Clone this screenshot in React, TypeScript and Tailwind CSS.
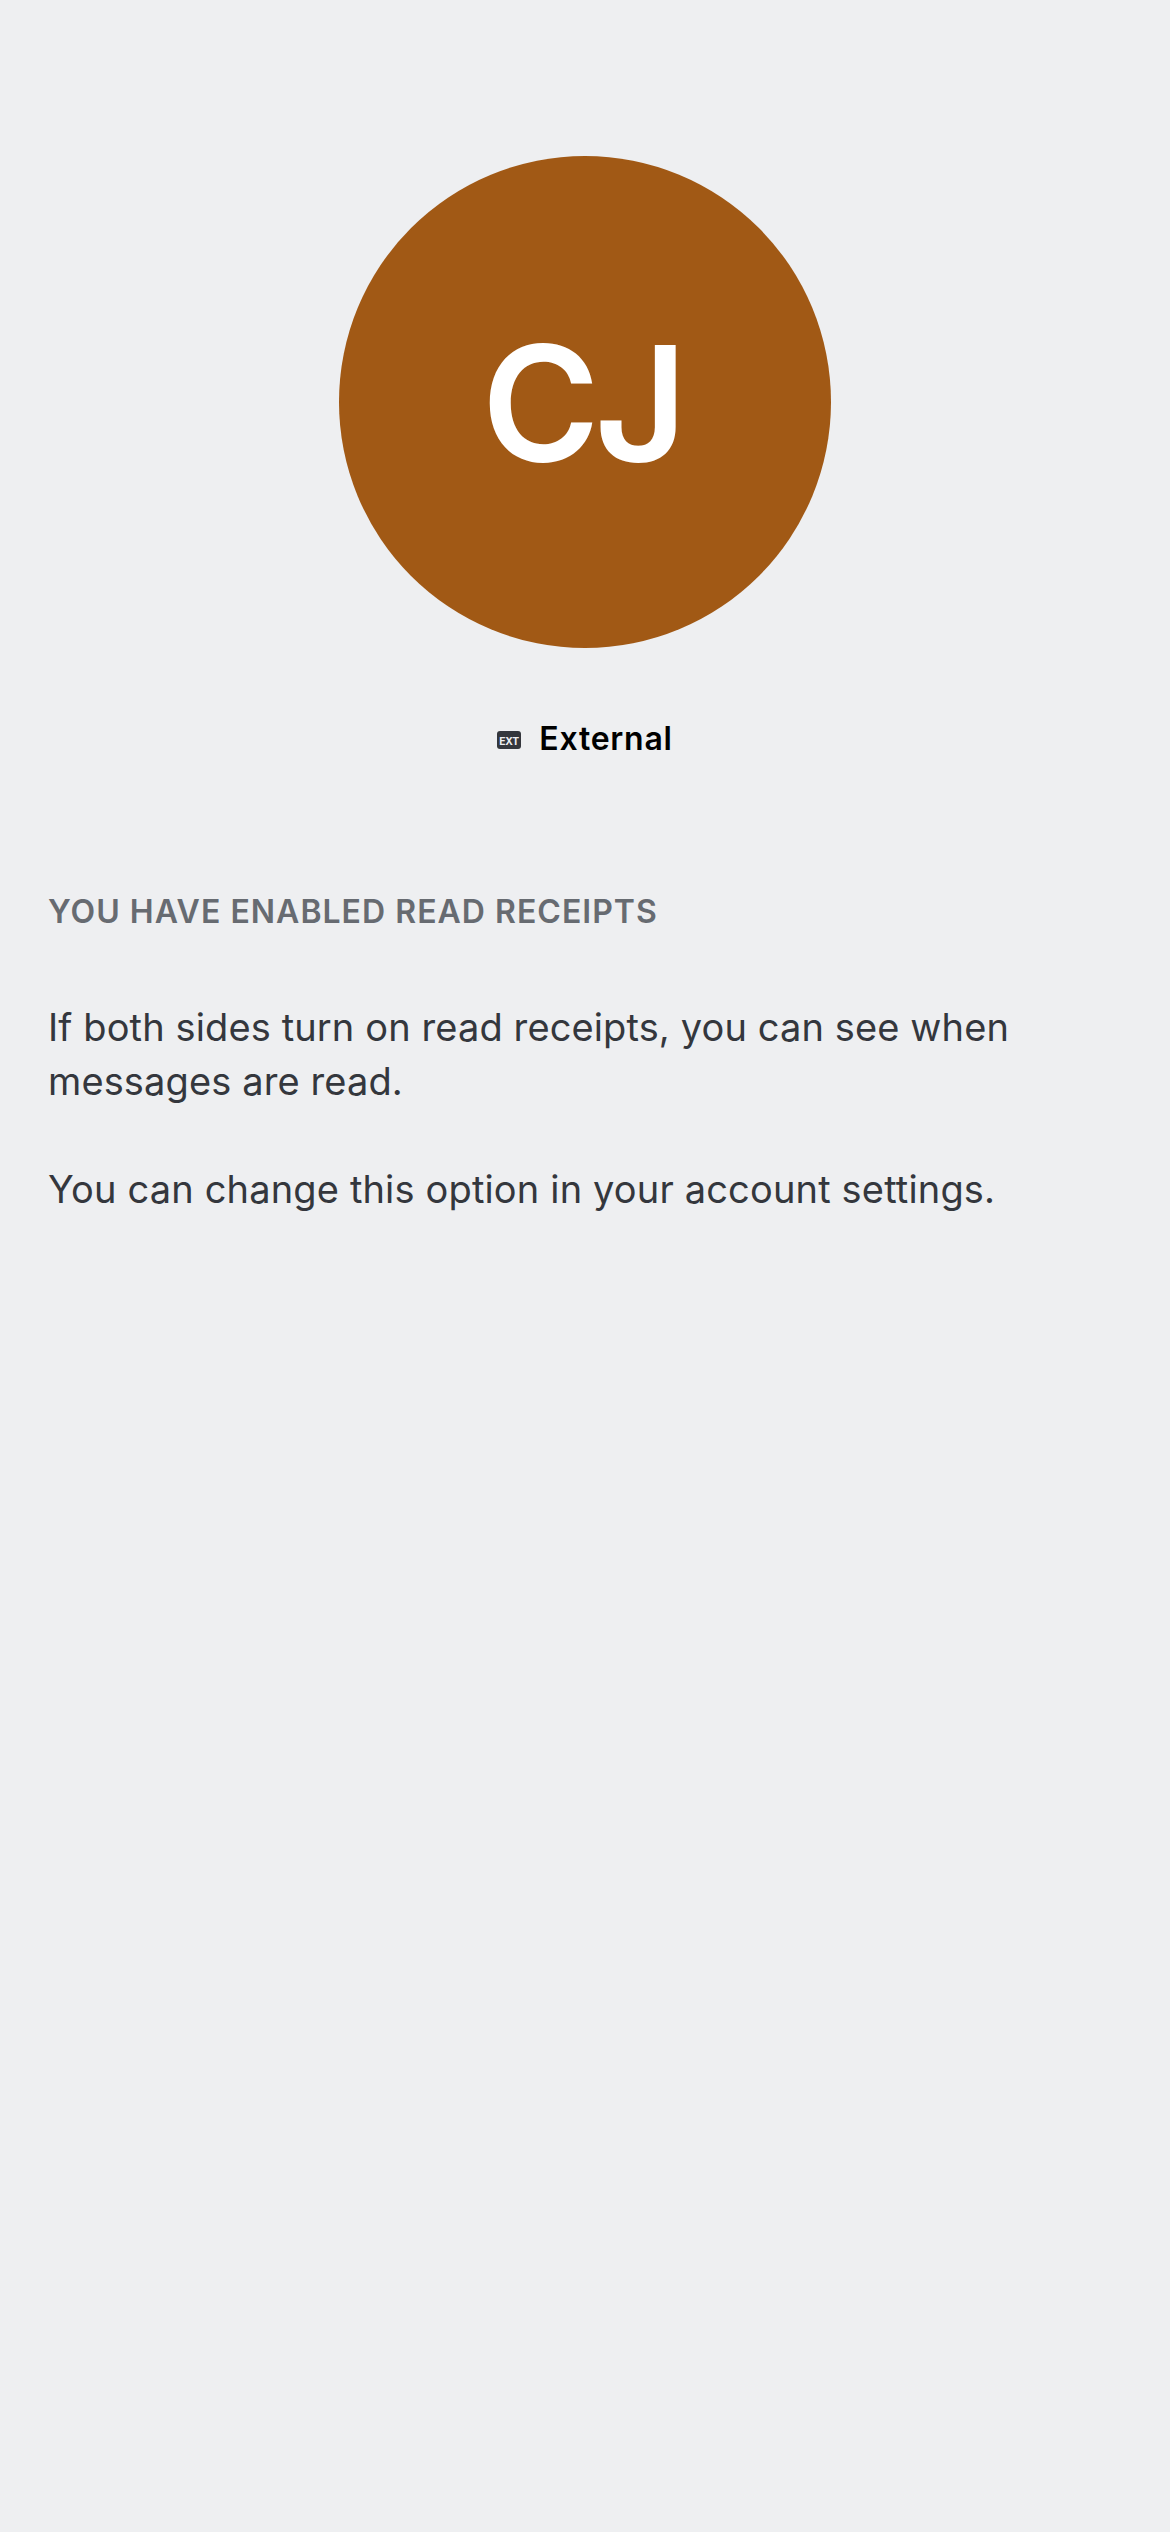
export default function App() {
  return (
    <main className="flex h-[2532px] w-full flex-col items-center bg-[#eeeff1] font-['Inter',sans-serif]">
      <div className="mt-[156px] flex size-[492px] shrink-0 items-center justify-center rounded-full bg-[#a15915]">
        <span className="mt-[2px] mr-[6px] text-[160px] font-semibold leading-none tracking-[-5px] text-white">CJ</span>
      </div>
      <div className="mt-[68px] flex h-[48px] items-center">
        <svg width="24" height="18" viewBox="0 0 24 18" className="mr-[18px]">
          <rect width="24" height="18" rx="3" fill="#34373d" />
          <text x="12" y="13.7" textAnchor="middle" fontSize="10.3" fontWeight="700" letterSpacing="-0.3" fill="#eeeff1">EXT</text>
        </svg>
        <span className="mb-[2px] text-[32px] font-semibold leading-[46px] tracking-[0.75px] text-black">External</span>
      </div>
      <section className="mt-[121px] w-full px-[48px]">
        <h2 className="whitespace-nowrap text-[32px] font-semibold leading-[54px] tracking-[1.02px] text-[#676b71]">YOU HAVE ENABLED READ RECEIPTS</h2>
        <p className="mt-[61px] whitespace-nowrap text-[38px] leading-[54px] tracking-[0.12px] text-[#34373d]">
          If both sides turn on read receipts, you can see when<br />messages are read.
        </p>
        <p className="mt-[54px] whitespace-nowrap text-[38px] leading-[54px] tracking-[0.16px] text-[#34373d]">
          You can change this option in your account settings.
        </p>
      </section>
    </main>
  );
}
